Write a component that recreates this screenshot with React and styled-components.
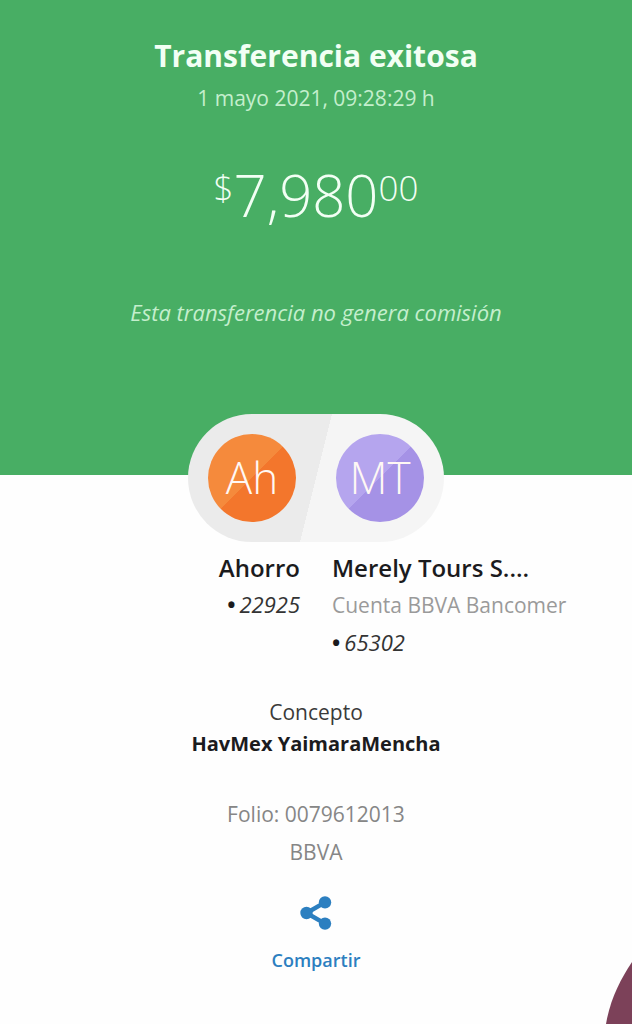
import React, {Component} from 'react';
import styled, {createGlobalStyle} from 'styled-components';

const GlobalStyle = createGlobalStyle`
    * {
        box-sizing: border-box;
    }
    body {
        margin: 0;
        background: #fefefe;
        font-family: 'Open Sans', 'Noto Sans', sans-serif;
        color: #1b1b1d;
    }
    h1, h2, p {
        margin: 0;
    }
`

const ReceiptPage = styled.main`
    position: relative;
    display: flex;
    flex-direction: column;
    align-items: center;
    min-height: 100vh;
    overflow: hidden;
`

const Header = styled.header`
    display: flex;
    flex-direction: column;
    align-items: center;
    width: 100%;
    padding: 36px 16px 146px;
    background: #48ae64;
    color: #f2fff4;
    text-align: center;
`

const Title = styled.h1`
    font-size: 30px;
    line-height: 40px;
    font-weight: 700;
`

const DateLine = styled.p`
    margin-top: 8px;
    font-size: 21px;
    line-height: 28px;
    color: #c4efcd;
`

const Amount = styled.p`
    display: flex;
    align-items: flex-start;
    margin-top: 47px;
    font-size: 58px;
    line-height: 72px;
    font-weight: 300;
`

const Small = styled.span`
    font-size: 35px;
    line-height: 58px;
`

const Notice = styled.p`
    margin-top: 64px;
    font-size: 22px;
    line-height: 34px;
    font-style: italic;
    color: #c4efcd;
`

const Pill = styled.div`
    display: flex;
    gap: 40px;
    margin-top: -61px;
    padding: 20px;
    border-radius: 64px;
    background: linear-gradient(104deg, #ebebeb 50%, #f5f5f5 50%);
`

const Avatar = styled.div`
    display: flex;
    align-items: center;
    justify-content: center;
    width: 88px;
    height: 88px;
    padding-bottom: 2px;
    border-radius: 50%;
    background: linear-gradient(135deg, ${props => props.$light} 50%, ${props => props.$dark} 50%);
    color: #fff8f4;
    font-size: 44px;
    line-height: 48px;
    font-weight: 300;
`

const Accounts = styled.section`
    display: grid;
    grid-template-columns: 1fr 1fr;
    gap: 32px;
    width: 100%;
    margin-top: 8px;
`

const Account = styled.div`
    text-align: ${props => props.$align};
`

const AccountName = styled.h2`
    font-size: 24px;
    line-height: 36px;
    font-weight: 600;
`

const Bank = styled.p`
    font-size: 21px;
    line-height: 38px;
    color: #9a9a9a;
`

const AccountNumber = styled.p`
    font-size: 22px;
    line-height: 36px;
    font-style: italic;
    color: #333;
`

const Bullet = styled.span`
    margin-right: 4px;
    font-style: normal;
    font-weight: 700;
    color: #1b1b1d;
`

const Details = styled.section`
    margin-top: 36px;
    font-size: 21px;
    line-height: 32px;
    color: #3a3a3a;
    text-align: center;
`

const Concept = styled.p`
    font-size: 20px;
    font-weight: 700;
    color: #1b1b1d;
`

const Folio = styled.section`
    margin-top: 35px;
    font-size: 21px;
    line-height: 38px;
    color: #868686;
    text-align: center;
`

const ShareButton = styled.button`
    display: flex;
    flex-direction: column;
    align-items: center;
    gap: 16px;
    margin-top: 25px;
    padding: 0;
    border: 0;
    background: none;
    color: #2c7fc0;
    font-family: inherit;
    font-size: 18px;
    line-height: 28px;
    font-weight: 600;
`

const Corner = styled.svg`
    position: absolute;
    right: 0;
    bottom: 0;
`

const ShareIcon = () => (
    <svg width="32" height="34" viewBox="0 0 32 34" aria-hidden="true">
        <path d="M25 6.400 6.500 17 25 27.600" fill="none" stroke="currentColor" strokeWidth="4.500" />
        <circle cx="25" cy="6.400" r="6.200" fill="currentColor" />
        <circle cx="6.500" cy="17" r="6.200" fill="currentColor" />
        <circle cx="25" cy="27.600" r="6.200" fill="currentColor" />
    </svg>
)

class TransferReceipt extends Component {
    render(){
        return(
            <ReceiptPage>
                <GlobalStyle />
                <Header>
                    <Title>Transferencia exitosa</Title>
                    <DateLine>1 mayo 2021, 09:28:29 h</DateLine>
                    <Amount>
                        <Small>$</Small>
                        7,980
                        <Small>00</Small>
                    </Amount>
                    <Notice>Esta transferencia no genera comisión</Notice>
                </Header>
                <Pill>
                    <Avatar $light='#f58a3c' $dark='#f3762c'>Ah</Avatar>
                    <Avatar $light='#b5a5ee' $dark='#a592e6'>MT</Avatar>
                </Pill>
                <Accounts>
                    <Account $align='right'>
                        <AccountName>Ahorro</AccountName>
                        <AccountNumber><Bullet>•</Bullet>22925</AccountNumber>
                    </Account>
                    <Account $align='left'>
                        <AccountName>Merely Tours S....</AccountName>
                        <Bank>Cuenta BBVA Bancomer</Bank>
                        <AccountNumber><Bullet>•</Bullet>65302</AccountNumber>
                    </Account>
                </Accounts>
                <Details>
                    <p>Concepto</p>
                    <Concept>HavMex YaimaraMencha</Concept>
                </Details>
                <Folio>
                    <p>Folio: 0079612013</p>
                    <p>BBVA</p>
                </Folio>
                <ShareButton type='button'>
                    <ShareIcon />
                    Compartir
                </ShareButton>
                <Corner width="26" height="62" viewBox="0 0 26 62" aria-hidden="true">
                    <path d="M26 0C14 18 4 38 0 62H26Z" fill="#7c4159" />
                </Corner>
            </ReceiptPage>
        )
    }
}

export default TransferReceipt;
